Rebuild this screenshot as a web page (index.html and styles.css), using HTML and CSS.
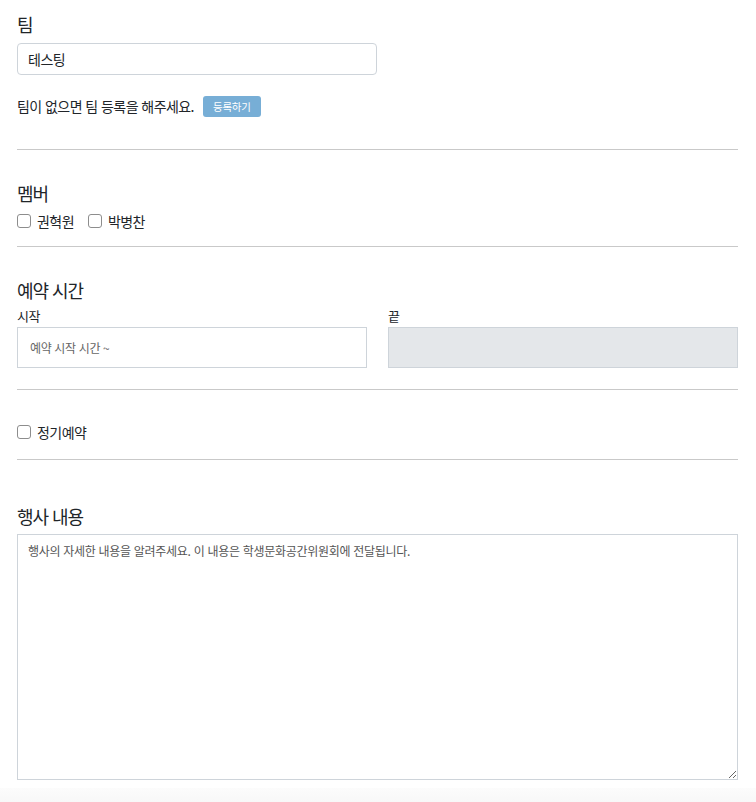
FILE: index.html
```html
<!DOCTYPE html>
<html lang="ko">
<head>
<meta charset="utf-8">
<link rel="stylesheet" href="styles.css">
</head>
<body>
<div class="page">
  <section class="sec-team">
    <h2 class="title">팀</h2>
    <input class="team-input" type="text" value="테스팅">
    <div class="notice">
      <span>팀이 없으면 팀 등록을 해주세요.</span>
      <button class="btn-register" type="button">등록하기</button>
    </div>
  </section>
  <hr class="divider">
  <section class="sec-member">
    <h2 class="title">멤버</h2>
    <div class="check-row">
      <label class="check"><input type="checkbox"><span>권혁원</span></label>
      <label class="check"><input type="checkbox"><span>박병찬</span></label>
    </div>
  </section>
  <hr class="divider">
  <section class="sec-time">
    <h2 class="title">예약 시간</h2>
    <div class="time-grid">
      <div class="field">
        <div class="field-label">시작</div>
        <input class="time-input" type="text" placeholder="예약 시작 시간 ~">
      </div>
      <div class="field">
        <div class="field-label">끝</div>
        <input class="time-input disabled" type="text" disabled>
      </div>
    </div>
  </section>
  <hr class="divider">
  <section class="sec-regular">
    <div class="check-row">
      <label class="check"><input type="checkbox"><span>정기예약</span></label>
    </div>
  </section>
  <hr class="divider">
  <section class="sec-content">
    <h2 class="title">행사 내용</h2>
    <textarea class="content-area" placeholder="행사의 자세한 내용을 알려주세요. 이 내용은 학생문화공간위원회에 전달됩니다."></textarea>
  </section>
</div>
<div class="bottom-bar"></div>
</body>
</html>
```

FILE: styles.css
```css
* { box-sizing: border-box; }
html, body {
  margin: 0;
  padding: 0;
  background: #fff;
  font-family: "Noto Sans CJK KR", "Noto Sans", sans-serif;
  color: #212529;
  letter-spacing: -0.035em;
}
.page {
  padding: 13px 18px 0 17px;
}
.title {
  margin: 0;
  font-size: 18px;
  line-height: 22px;
  font-weight: 400;
  color: #212529;
  letter-spacing: -0.06em;
}
.team-input {
  display: block;
  margin-top: 8px;
  width: 360px;
  height: 32px;
  border: 1px solid #ced4da;
  border-radius: 4px;
  padding: 0 10px;
  font-family: inherit;
  font-size: 14px;
  letter-spacing: -0.035em;
  color: #212529;
}
.notice {
  margin-top: 21px;
  display: flex;
  align-items: center;
  gap: 9px;
  font-size: 14px;
  line-height: 21px;
}
.btn-register {
  height: 21px;
  padding: 0 10px;
  border: none;
  border-radius: 3px;
  background: #77aed6;
  color: #fff;
  font-family: inherit;
  font-size: 10.5px;
  letter-spacing: -0.02em;
  line-height: 21px;
}
.divider {
  margin: 0;
  border: none;
  border-top: 1px solid #c9c9c9;
}
.sec-team { padding-bottom: 32px; }
.sec-member { padding-top: 32px; padding-bottom: 15px; }
.sec-time { padding-top: 32px; padding-bottom: 21px; }
.sec-regular { padding-top: 32px; padding-bottom: 17px; }
.sec-content { padding-top: 45px; }
.check-row {
  display: flex;
  gap: 14px;
  height: 20px;
  align-items: center;
}
.sec-member .check-row { margin-top: 7px; }
.check {
  display: flex;
  align-items: center;
  gap: 6px;
  font-size: 14px;
  line-height: 20px;
}
.check input {
  appearance: none;
  -webkit-appearance: none;
  margin: 0;
  width: 14px;
  height: 14px;
  border: 1px solid #8d8d8d;
  border-radius: 3px;
  background: #fff;
}
.time-grid {
  display: grid;
  grid-template-columns: 350px 350px;
  column-gap: 21px;
  margin-top: 6px;
}
.field-label {
  font-size: 13px;
  line-height: 18px;
  margin-bottom: 2px;
}
.time-input {
  display: block;
  width: 100%;
  height: 41px;
  border: 1px solid #ced4da;
  border-radius: 0;
  padding: 0 12px;
  font-family: inherit;
  font-size: 12px;
  letter-spacing: -0.03em;
  color: #212529;
  background: #fff;
}
.time-input::placeholder { color: #666; }
.time-input.disabled { background: #e4e7ea; }
.content-area {
  display: block;
  margin-top: 7px;
  width: 721px;
  height: 246px;
  border: 1px solid #ced4da;
  border-radius: 0;
  padding: 8px 10px;
  font-family: inherit;
  font-size: 12px;
  letter-spacing: -0.025em;
  line-height: 16px;
  resize: vertical;
}
.content-area::placeholder { color: #555; }
.bottom-bar {
  height: 14px;
  margin-top: 8px;
  background: linear-gradient(to bottom, #fcfcfc, #f8f8f8);
}
```
